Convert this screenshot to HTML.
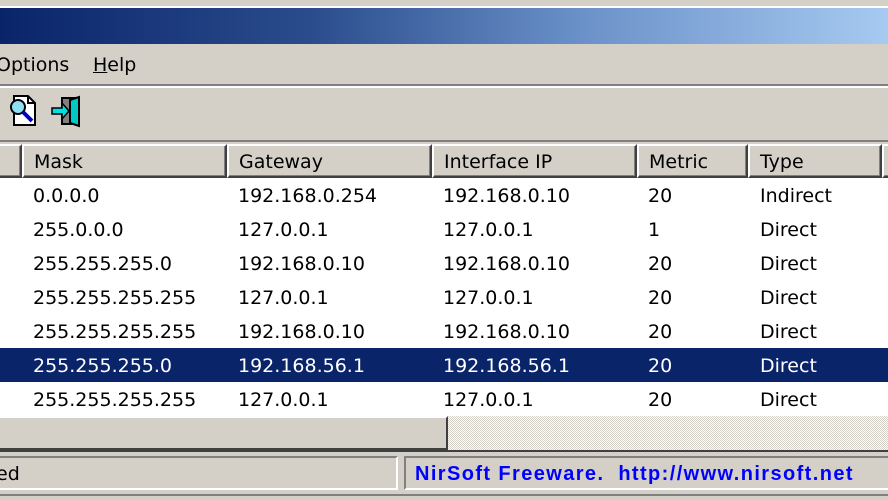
<!DOCTYPE html>
<html><head><meta charset="utf-8"><style>
*{margin:0;padding:0;box-sizing:border-box}
body{width:888px;height:500px;overflow:hidden;background:#d4d0c8;font-family:"DejaVu Sans","Liberation Sans",sans-serif;font-size:19px;color:#000;position:relative}
.abs{position:absolute}
.title{left:0;top:8px;width:888px;height:36px;background:linear-gradient(90deg,#0a246a 0%,#2a4c8c 35%,#6a90c8 65%,#a6caf0 100%)}
.menu span{position:absolute;top:54px}
.hdr{top:144px;height:34px;background:#d4d0c8;border-top:2px solid #fff;border-left:2px solid #fff;border-right:2px solid #404040;border-bottom:2px solid #404040;box-shadow:inset -1px -1px 0 #808080}
.hdr span{position:absolute;left:10px;top:5px}
.list{left:0;top:178px;width:888px;height:238px;background:#fff}
.row{position:absolute;left:0;width:888px;height:34px}
.row span{position:absolute;top:7px}
.sel{background:#0a246a;color:#fff}
</style></head><body>
<div class="abs" style="left:0;top:0;width:888px;height:8px;background:#d4d0c8;border-bottom:2px solid #fff"></div>
<div class="abs title"></div>
<div class="menu">
<span style="left:-4px">Options</span>
<span style="left:93px"><u>H</u>elp</span>
</div>
<div class="abs" style="left:0;top:84px;width:888px;height:2px;background:#808080"></div>
<div class="abs" style="left:0;top:86px;width:888px;height:2px;background:#fff"></div>
<svg class="abs" style="left:6px;top:94px" width="34" height="34" viewBox="0 0 34 34">
<path d="M8 2h14l7 7v22H8z" fill="#fff" stroke="#000" stroke-width="2"/>
<path d="M22 2v7h7" fill="none" stroke="#000" stroke-width="2"/>
<circle cx="12" cy="13" r="7" fill="#8fe0f0" stroke="#000" stroke-width="2"/>
<path d="M17 18l9 9" stroke="#0000c0" stroke-width="4"/>
</svg>
<svg class="abs" style="left:50px;top:94px" width="36" height="34" viewBox="0 0 36 34">
<rect x="12" y="4" width="16" height="26" fill="#808080" stroke="#000" stroke-width="2"/>
<path d="M20 6l9-3v29l-9-3z" fill="#00c8c8" stroke="#000" stroke-width="2"/>
<path d="M2 14h10v-5l7 8-7 8v-5H2z" fill="#00e0e0" stroke="#000" stroke-width="1.5"/>
</svg>
<div class="abs" style="left:0;top:140px;width:888px;height:2px;background:#808080"></div>
<div class="abs hdr" style="left:-4px;width:26px"></div>
<div class="abs hdr" style="left:22px;width:205px"><span>Mask</span></div>
<div class="abs hdr" style="left:227px;width:205px"><span>Gateway</span></div>
<div class="abs hdr" style="left:432px;width:205px"><span>Interface IP</span></div>
<div class="abs hdr" style="left:637px;width:111px"><span>Metric</span></div>
<div class="abs hdr" style="left:748px;width:134px"><span>Type</span></div>
<div class="abs hdr" style="left:882px;width:20px"></div>
<div class="abs list">
<div class="row" style="top:0"><span style="left:33px">0.0.0.0</span><span style="left:238px">192.168.0.254</span><span style="left:443px">192.168.0.10</span><span style="left:648px">20</span><span style="left:760px">Indirect</span></div>
<div class="row" style="top:34px"><span style="left:33px">255.0.0.0</span><span style="left:238px">127.0.0.1</span><span style="left:443px">127.0.0.1</span><span style="left:648px">1</span><span style="left:760px">Direct</span></div>
<div class="row" style="top:68px"><span style="left:33px">255.255.255.0</span><span style="left:238px">192.168.0.10</span><span style="left:443px">192.168.0.10</span><span style="left:648px">20</span><span style="left:760px">Direct</span></div>
<div class="row" style="top:102px"><span style="left:33px">255.255.255.255</span><span style="left:238px">127.0.0.1</span><span style="left:443px">127.0.0.1</span><span style="left:648px">20</span><span style="left:760px">Direct</span></div>
<div class="row" style="top:136px"><span style="left:33px">255.255.255.255</span><span style="left:238px">192.168.0.10</span><span style="left:443px">192.168.0.10</span><span style="left:648px">20</span><span style="left:760px">Direct</span></div>
<div class="row sel" style="top:170px"><span style="left:33px">255.255.255.0</span><span style="left:238px">192.168.56.1</span><span style="left:443px">192.168.56.1</span><span style="left:648px">20</span><span style="left:760px">Direct</span></div>
<div class="row" style="top:204px"><span style="left:33px">255.255.255.255</span><span style="left:238px">127.0.0.1</span><span style="left:443px">127.0.0.1</span><span style="left:648px">20</span><span style="left:760px">Direct</span></div>
</div>
<div class="abs" style="left:0;top:416px;width:888px;height:34px;background:repeating-conic-gradient(#fff 0 25%,#d4d0c8 0 50%) 0 0/2px 2px"></div>
<div class="abs" style="left:-4px;top:416px;width:452px;height:34px;background:#d4d0c8;border-top:2px solid #fff;border-left:2px solid #fff;border-right:2px solid #404040;border-bottom:2px solid #404040"></div>
<div class="abs" style="left:0;top:450px;width:888px;height:2px;background:#404040"></div>
<div class="abs" style="left:-4px;top:456px;width:402px;height:34px;border-top:2px solid #808080;border-right:2px solid #fff;border-bottom:2px solid #fff"><span style="position:absolute;left:0;top:5px">ed</span></div>
<div class="abs" style="left:404px;top:456px;width:490px;height:34px;border-top:2px solid #808080;border-left:2px solid #808080;border-bottom:2px solid #fff"><span style="position:absolute;left:9px;top:5px;color:#0000ff;font-weight:bold;font-family:'Liberation Sans',sans-serif;font-size:20px;letter-spacing:1.4px;white-space:nowrap">NirSoft Freeware.&nbsp; http://www.nirsoft.net</span></div>
<div class="abs" style="left:0;top:494px;width:888px;height:6px;background:#d4d0c8;border-top:2px solid #808080"></div>
</body></html>
